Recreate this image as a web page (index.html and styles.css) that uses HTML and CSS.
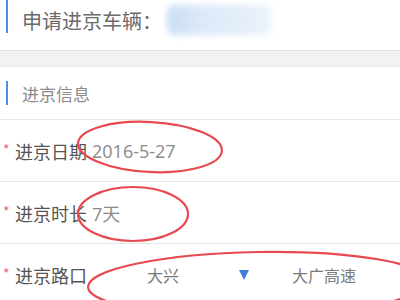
FILE: index.html
```html
<!DOCTYPE html>
<html lang="zh">
<head>
<meta charset="utf-8">
<link rel="stylesheet" href="styles.css">
</head>
<body>
<div class="page">
  <div class="header">
    <span class="bar bar-top"></span>
    <span class="title">申请进京车辆：</span>
    <span class="blur"></span>
  </div>
  <div class="gap"></div>
  <div class="section">
    <span class="bar bar-sec"></span>
    <span class="sec-title">进京信息</span>
  </div>
  <div class="row">
    <span class="star">*</span><span class="label">进京日期</span><span class="value">2016-5-27</span>
  </div>
  <div class="row">
    <span class="star">*</span><span class="label">进京时长</span><span class="value">7天</span>
  </div>
  <div class="row last">
    <span class="star">*</span><span class="label">进京路口</span>
    <span class="sel sel1">大兴</span>
    <span class="tri"></span>
    <span class="sel sel2">大广高速</span>
  </div>
  <svg class="marks" width="400" height="300" viewBox="0 0 400 300">
    <ellipse cx="150" cy="147" rx="72" ry="25" transform="rotate(3 150 147)"/>
    <ellipse cx="133" cy="214" rx="55" ry="27"/>
    <ellipse cx="258" cy="284" rx="170" ry="32" transform="rotate(-1 258 284)"/>
  </svg>
</div>
</body>
</html>
```
FILE: styles.css
```css
html, body {
  margin: 0;
  padding: 0;
  background: #fff;
}
.page {
  position: relative;
  width: 400px;
  height: 300px;
  overflow: hidden;
  font-family: "Noto Sans CJK SC", "Noto Sans", sans-serif;
}
.header {
  height: 50px;
  display: flex;
  align-items: flex-start;
  position: relative;
}
.bar {
  display: block;
  width: 2px;
  background: #4a8fe0;
  flex: none;
}
.bar-top {
  height: 33px;
  margin-left: 6px;
}
.title {
  margin-left: 14px;
  margin-top: 7px;
  font-size: 20px;
  line-height: 28px;
  color: #6b6b6b;
}
.blur {
  position: absolute;
  left: 167px;
  top: 5px;
  width: 104px;
  height: 30px;
  background: linear-gradient(90deg, #c9ddf6 0%, #dbe8f8 30%, #e6effa 80%, #eef4fb 100%);
  filter: blur(3px);
  border-radius: 8px;
}
.gap {
  height: 15px;
  background: #f2f2f2;
  border-top: 1px solid #e4e4e4;
  border-bottom: 1px solid #e8e8e8;
}
.section {
  height: 52px;
  display: flex;
  align-items: center;
  border-bottom: 1px solid #e6e6e6;
}
.bar-sec {
  height: 24px;
  margin-left: 6px;
}
.sec-title {
  margin-left: 14px;
  font-size: 17px;
  color: #8a8a8a;
}
.row {
  height: 61px;
  display: flex;
  align-items: center;
  border-bottom: 1px solid #e6e6e6;
  position: relative;
}
.row.last {
  border-bottom: none;
}
.star {
  color: #e8666e;
  font-size: 14px;
  margin-left: 3px;
  width: 12px;
  margin-top: -4px;
}
.label {
  font-size: 18px;
  color: #555;
}
.value {
  margin-left: 5px;
  font-size: 18px;
  color: #8a8a8a;
  font-family: "Open Sans", "Noto Sans CJK SC", sans-serif;
}
.sel {
  font-size: 16px;
  color: #7a7a7a;
}
.sel1 {
  margin-left: 60px;
}
.tri {
  margin-left: 60px;
  width: 0;
  height: 0;
  border-left: 5px solid transparent;
  border-right: 5px solid transparent;
  border-top: 10px solid #3c80d8;
}
.sel2 {
  margin-left: 43px;
}
.marks {
  position: absolute;
  left: 0;
  top: 0;
  pointer-events: none;
}
.marks ellipse {
  fill: none;
  stroke: #e84850;
  stroke-width: 2.2;
}
```
